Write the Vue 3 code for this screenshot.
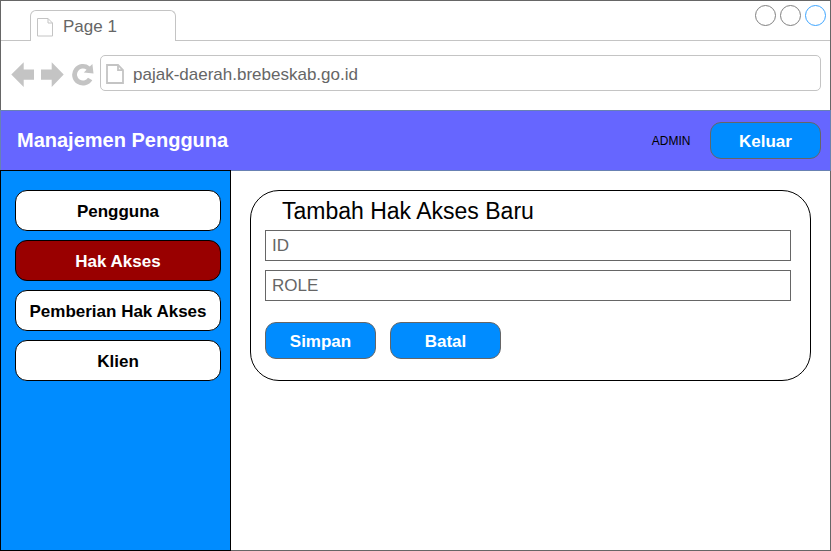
<script setup>
import { ref } from 'vue'

const menu = ['Pengguna', 'Hak Akses', 'Pemberian Hak Akses', 'Klien']
const active = ref('Hak Akses')
const id = ref('')
const role = ref('')
</script>

<template>
  <div class="window">
    <div class="tabs">
      <div class="tab">
        <svg class="tab-icon" width="17" height="20" viewBox="0 0 17 20">
          <path d="M.5 1.5H11L15.5 6V19H.5Z M11 1.5V6H15.5" />
        </svg>
        <span>Page 1</span>
      </div>
      <div class="controls">
        <i class="dot"></i><i class="dot"></i><i class="dot blue"></i>
      </div>
    </div>

    <div class="toolbar">
      <svg class="nav" width="88" height="28" viewBox="10 61 88 28">
        <path d="M11.3 74.6L23.7 62.2V69.6H34V79.7H23.7V87Z" />
        <path d="M63.7 74.6L51.7 62.2V69.6H41V79.7H51.7V87Z" />
        <path d="M92.3 80.2A10.8 10.8 0 1 1 89.8 66.4L92.4 63.9L93.5 73.6L83.8 72.4L86.6 69.7A6 6 0 1 0 88 77.8Z" />
      </svg>
      <div class="address">
        <svg class="page-icon" width="18" height="20" viewBox="0 0 18 20">
          <path d="M1 1H12L17 6.2V19H1Z M12 1V6.2H17" />
        </svg>
        <span>pajak-daerah.brebeskab.go.id</span>
      </div>
    </div>

    <header class="header">
      <h1>Manajemen Pengguna</h1>
      <span class="user">ADMIN</span>
      <button class="btn">Keluar</button>
    </header>

    <div class="body">
      <nav class="sidebar">
        <button
          v-for="item in menu"
          :key="item"
          class="item"
          :class="{ active: item === active }"
          @click="active = item"
        >{{ item }}</button>
      </nav>
      <main class="main">
        <form class="card" @submit.prevent>
          <h2>Tambah Hak Akses Baru</h2>
          <input v-model="id" placeholder="ID" />
          <input v-model="role" placeholder="ROLE" />
          <div class="actions">
            <button class="btn">Simpan</button>
            <button class="btn" type="button">Batal</button>
          </div>
        </form>
      </main>
    </div>
  </div>
</template>

<style>
body {
  margin: 0;
  overflow: hidden;
}
</style>

<style scoped>
* {
  box-sizing: border-box;
}
.window {
  width: 831px;
  height: 551px;
  border: 1px solid #666;
  background: #fff;
  font-family: "Liberation Sans", Arial, Helvetica, sans-serif;
  font-size: 17px;
  display: flex;
  flex-direction: column;
}
.tabs {
  height: 40px;
  flex: none;
  display: flex;
  justify-content: space-between;
  align-items: flex-end;
  border-bottom: 1px solid #c4c4c4;
  padding-left: 29px;
}
.tab {
  width: 146px;
  height: 31px;
  margin-bottom: -1px;
  border: 1px solid #c4c4c4;
  border-bottom: 0;
  border-radius: 6px 6px 0 0;
  background: #fff;
  color: #666;
  display: flex;
  align-items: center;
  gap: 9px;
  padding: 2px 0 0 6px;
}
svg {
  flex: none;
  display: block;
}
.tab-icon path,
.page-icon path {
  fill: none;
  stroke: #c4c4c4;
  stroke-width: 1;
}
.page-icon path {
  stroke-width: 1.8;
}
.controls {
  align-self: flex-start;
  display: flex;
  gap: 4px;
  padding: 4px 4px 0 0;
}
.dot {
  width: 21px;
  height: 21px;
  border: 1px solid #808080;
  border-radius: 50%;
}
.dot.blue {
  border-color: #3da5ff;
}
.toolbar {
  height: 69px;
  flex: none;
  display: flex;
  align-items: flex-start;
  padding: 14px 9px 0;
}
.nav {
  margin-top: 6px;
  fill: #c4c4c4;
}
.address {
  flex: 1;
  height: 36px;
  margin-left: 2px;
  border: 1px solid #c4c4c4;
  border-radius: 5px;
  color: #666;
  display: flex;
  align-items: center;
  gap: 9px;
  padding: 1px 0 0 5px;
}
.address span {
  padding-top: 2px;
}
.header {
  height: 61px;
  flex: none;
  margin: 0 -1px;
  background: #66f;
  border: 1px solid #6881b3;
  display: flex;
  align-items: center;
  padding: 0 9px 0 16px;
}
h1 {
  margin: 0;
  padding-bottom: 2px;
  flex: 1;
  font-size: 20px;
  line-height: 24px;
  color: #fff;
}
.user {
  font-size: 12px;
  color: #000;
  margin-right: 19.5px;
}
button {
  font-family: inherit;
  font-size: 17px;
  font-weight: bold;
  line-height: 20px;
  padding: 2px 0 0;
  margin: 0;
}
.btn {
  width: 111px;
  height: 37px;
  border: 1px solid #666;
  border-radius: 11px;
  background: #008cff;
  color: #fff;
}
.body {
  flex: 1;
  display: flex;
  margin: -1px 0 -1px -1px;
}
.sidebar {
  width: 231px;
  flex: none;
  background: #008cff;
  border: 1px solid #000;
  display: flex;
  flex-direction: column;
  gap: 9px;
  padding: 19px 9px 0 14px;
}
.item {
  height: 41px;
  flex: none;
  border: 1px solid #000;
  border-radius: 12px;
  background: #fff;
  color: #000;
}
.item.active {
  background: #900;
  color: #fff;
}
.main {
  flex: 1;
  padding: 20px 19px 0;
}
.card {
  height: 191px;
  border: 1px solid #000;
  border-radius: 29px;
  padding: 8px 19px 0 14px;
  display: flex;
  flex-direction: column;
}
h2 {
  margin: 0 0 6px 17px;
  font-size: 23px;
  line-height: 25px;
  font-weight: normal;
  color: #000;
}
input {
  height: 31px;
  flex: none;
  margin: 0 0 9px;
  border: 1px solid #666;
  border-radius: 0;
  padding: 0 6px;
  font-family: inherit;
  font-size: 17px;
  color: #666;
  background: #fff;
}
input::placeholder {
  color: #666;
  opacity: 1;
}
.actions {
  display: flex;
  gap: 14px;
  margin-top: 12px;
}
</style>
